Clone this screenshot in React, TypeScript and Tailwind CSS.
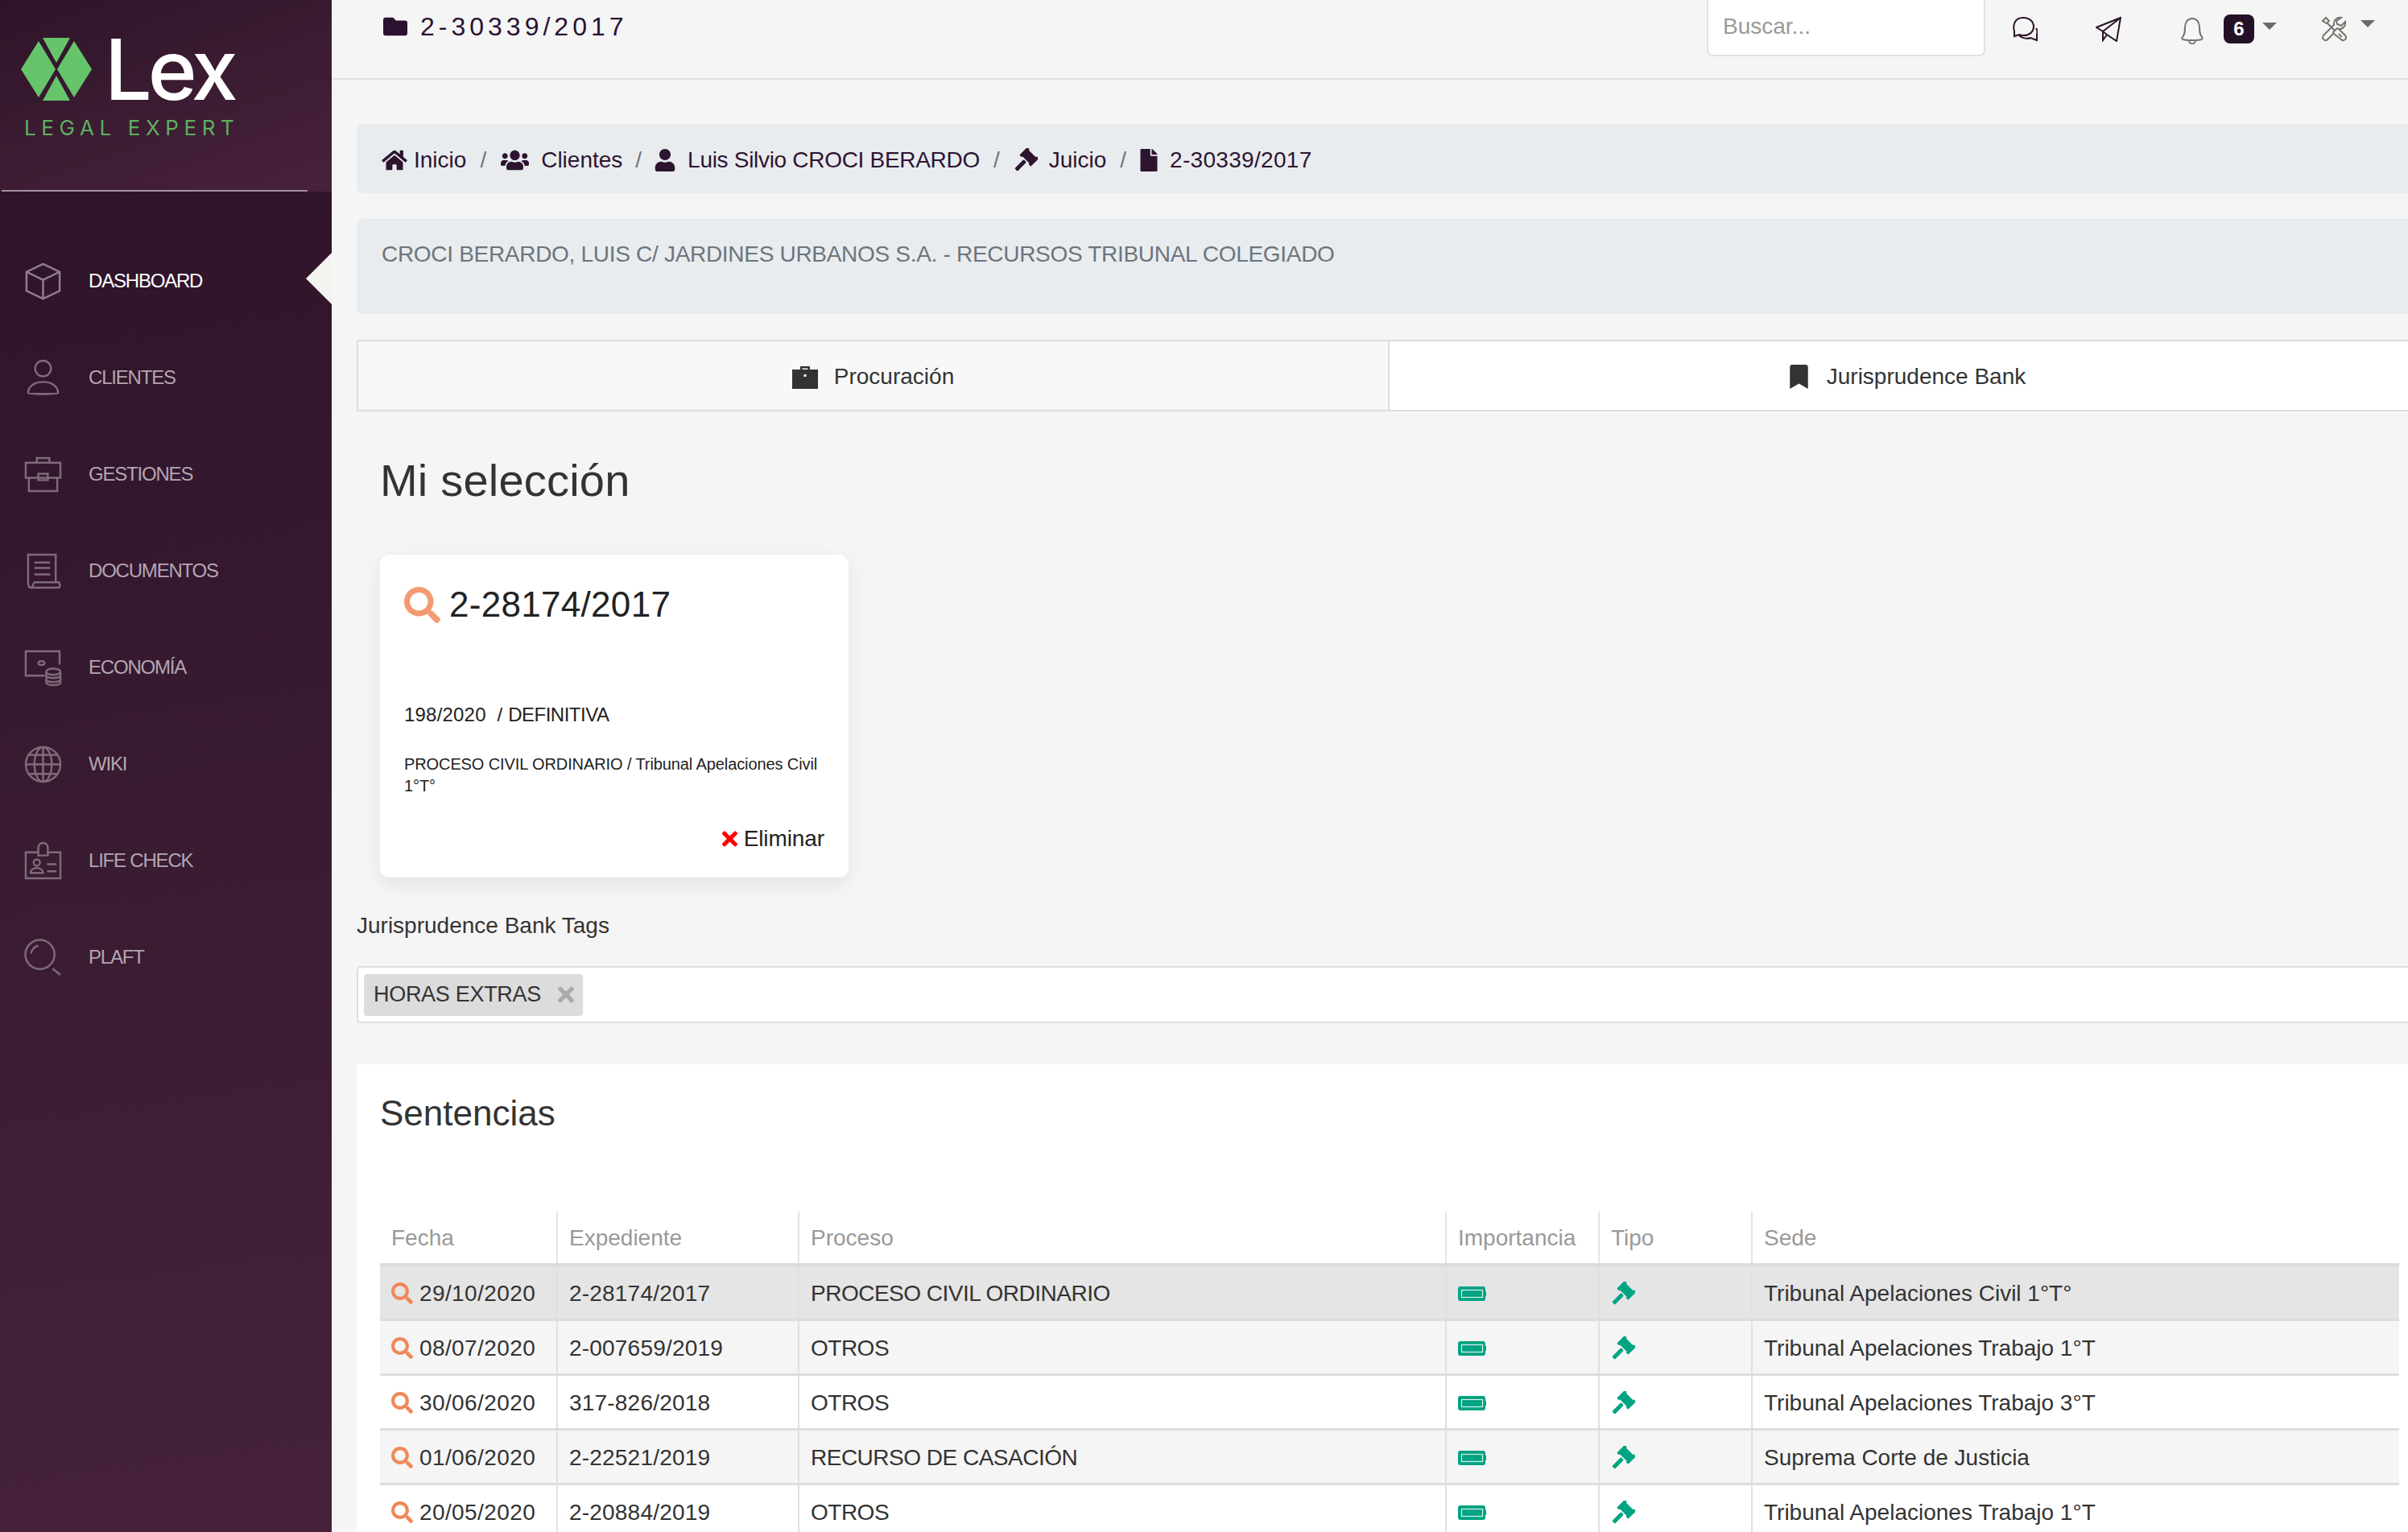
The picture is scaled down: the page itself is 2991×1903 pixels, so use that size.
import { FaBookmark, FaFile, FaFolder, FaHome, FaSearch, FaTimes, FaUser, FaUsers } from 'react-icons/fa'
import type { ReactNode } from 'react'

function NavIcon({ children }: { children: ReactNode }) {
  return (
    <svg viewBox="0 0 48 48" className="h-[47px] w-[47px] shrink-0" fill="none" stroke="currentColor" strokeWidth="2.5">
      {children}
    </svg>
  )
}

const navItems = [
  {
    label: 'DASHBOARD',
    icon: (
      <>
        <path d="M24 2 45 12v24L24 46 3 36V12Z" />
        <path d="M3 12l21 10 21-10M24 22v24" />
      </>
    ),
  },
  {
    label: 'CLIENTES',
    icon: (
      <>
        <ellipse cx="24" cy="12" rx="10" ry="10" />
        <path d="M5 43c0-9 9-14 19-14s19 5 19 14c0 2-38 2-38 0Z" />
      </>
    ),
  },
  {
    label: 'GESTIONES',
    icon: (
      <>
        <path d="M16 9V3h16v6M2 9h44v19H2ZM6 28v17h36V28" />
        <path d="M18 23h12v8H18Z" />
      </>
    ),
  },
  {
    label: 'DOCUMENTOS',
    icon: (
      <>
        <path d="M40 38V3H5v36c0 4 2 6 5 6h33c3 0 3-7 0-7H14c-3 0-3 7-4 7" />
        <path d="M13 13h20M13 20h20M13 28h20" />
      </>
    ),
  },
  {
    label: 'ECONOMÍA',
    icon: (
      <>
        <path d="M45 20V3H2v31h24" />
        <ellipse cx="22" cy="18" rx="4" ry="2.5" />
        <ellipse cx="37" cy="29" rx="9" ry="4" />
        <path d="M28 29v14c0 4 18 4 18 0V29M28 34c0 4 18 4 18 0M28 39c0 4 18 4 18 0" />
      </>
    ),
  },
  {
    label: 'WIKI',
    icon: (
      <>
        <circle cx="24" cy="24" r="22" />
        <ellipse cx="24" cy="24" rx="11" ry="22" />
        <path d="M24 2v44M2 24h44M6 12h36M6 36h36" />
      </>
    ),
  },
  {
    label: 'LIFE CHECK',
    icon: (
      <>
        <path d="M18 13H2v33h44V13H30" />
        <path d="M18 17V7a6 6 0 0 1 12 0v10Z" />
        <circle cx="16" cy="26" r="4" />
        <path d="M8 39c0-8 16-8 16 0ZM29 28h12M29 37h12" />
      </>
    ),
  },
  {
    label: 'PLAFT',
    icon: (
      <>
        <circle cx="20" cy="20" r="18.5" />
        <path d="M9 19c0-5 4-9 9-10M36 38l10 8" />
      </>
    ),
  },
]

function Gavel({ className }: { className: string }) {
  return (
    <svg viewBox="0 0 30 30" className={className} fill="currentColor">
      <g transform="rotate(45 15 15)">
        <rect x="7" y="3.5" width="16" height="11" />
        <rect x="5" y="2" width="4" height="14" rx="1" />
        <rect x="21" y="2" width="4" height="14" rx="1" />
        <rect x="12.5" y="16" width="5" height="16" rx="1.5" />
      </g>
    </svg>
  )
}

function Battery() {
  return (
    <svg viewBox="0 0 35 18" className="h-[18px] w-[35px]">
      <path d="M3 0h28a3 3 0 0 1 3 3v3h1v6h-1v3a3 3 0 0 1-3 3H3a3 3 0 0 1-3-3V3a3 3 0 0 1 3-3Z" fill="#00a383" />
      <rect x="4.5" y="4.5" width="26" height="9" fill="#00a383" stroke="#dff1ec" strokeWidth="1.2" />
    </svg>
  )
}

function Caret({ className }: { className: string }) {
  return <span className={`h-0 w-0 border-x-[9px] border-t-[9px] border-x-transparent border-t-[#6f6a62] ${className}`} />
}

function Sidebar() {
  return (
    <aside className="relative flex h-full w-[412px] shrink-0 flex-col bg-[linear-gradient(172deg,#2b1228_0%,#45223a_100%)]">
      <div className="h-[238px] bg-[linear-gradient(160deg,#2e1429_0%,#3a1b31_45%,#48223b_100%)]">
        <div className="flex items-center pl-[26px] pt-[46px]">
          <svg viewBox="0 0 88 78" className="h-[78px] w-[88px] shrink-0" fill="#66c46a">
            <path d="M22 4 43 39 22 74 0 39ZM66 4 88 39 66 74 45 39ZM27 0H61L44 31ZM27 78H61L44 47Z" />
          </svg>
          <span className="ml-[16px] font-['Inter',sans-serif] text-[104px] leading-[80px] font-medium tracking-[-5px] text-white">Lex</span>
        </div>
        <div className="mt-[18px] pl-[30px] font-['Inter',sans-serif] text-[26px] leading-[30px] tracking-[6.6px] whitespace-nowrap text-[#5cb05f]">LEGAL EXPERT</div>
        <div className="mt-[62px] ml-[2px] h-[2px] w-[380px] bg-[#a48fa2]" />
      </div>
      <nav className="pt-[51px]">
        {navItems.map((item, i) => (
          <div key={item.label} className="relative flex h-[120px] items-center pl-[30px]">
            <span className={i === 0 ? 'text-[#90808f]' : 'text-[#7d6b7b]'}>
              <NavIcon>{item.icon}</NavIcon>
            </span>
            <span className={`ml-[33px] text-[24px] tracking-[-1.2px] ${i === 0 ? 'text-white' : 'text-[#b3a6b1]'}`}>{item.label}</span>
            {i === 0 && <span className="absolute top-[25px] right-0 h-[64px] w-[32px] bg-[#f3f3ef] [clip-path:polygon(100%_0,0_50%,100%_100%)]" />}
          </div>
        ))}
      </nav>
    </aside>
  )
}

function Topbar() {
  return (
    <header className="flex h-[99px] items-start border-b-2 border-[#e0e0e0] pl-[62px]">
      <div className="flex h-[66px] items-center text-[#2a1230]">
        <FaFolder className="h-[30px] w-[34px]" />
        <span className="ml-[14px] text-[32px] tracking-[5px]">2-30339/2017</span>
      </div>
      <div className="ml-auto flex h-[70px] w-[346px] items-center rounded-b-[8px] border-2 border-t-0 border-[#e2e2e2] bg-white pb-[3px] pl-[18px] text-[28px] text-[#9a9a9a]">Buscar...</div>
      <svg viewBox="0 0 32 32" className="mt-[20px] ml-[33px] h-[32px] w-[32px] text-[#2a1228]" fill="none" stroke="currentColor" strokeWidth="2">
        <path d="M3 25v-6C1 12 3 2 14 2c8 0 13 5 13 11 0 7-6 11-12 11-2 0-4 0-6-1Z" />
        <path d="M9 24c3 3 9 5 14 3l8 3v-7c1-3 1-5-1-8" />
      </svg>
      <svg viewBox="0 0 32 32" className="mt-[20px] ml-[72px] h-[32px] w-[32px] text-[#2a1228]" fill="none" stroke="currentColor" strokeWidth="2">
        <path d="M31 2 1 14l8 5 5 4 12 8ZM31 2 9 19v11l5-7" />
      </svg>
      <svg viewBox="0 0 32 34" className="mt-[21px] ml-[72px] h-[34px] w-[32px] text-[#77736c]" fill="none" stroke="currentColor" strokeWidth="2">
        <path d="M16 2c-6 0-9 5-9 11 0 5 0 8-3 12-2 3 0 4 12 4s14-1 12-4c-3-4-3-7-3-12 0-6-3-11-9-11ZM12 29c0 6 8 6 8 0" />
      </svg>
      <span className="mt-[18px] ml-[23px] flex h-[36px] w-[38px] items-center justify-center rounded-[8px] bg-[#251127] text-[24px] font-bold text-white">6</span>
      <Caret className="mt-[28px] ml-[10px]" />
      <svg viewBox="0 0 32 32" className="mt-[20px] ml-[55px] h-[32px] w-[32px] text-[#77736c]" fill="none" stroke="currentColor" strokeWidth="2">
        <path d="M25 2c-5-1-10 3-9 9L3 24c-3 4 2 8 5 5L21 16c6 1 10-4 9-9l-5 5-5-2-1-4Z" />
        <path d="M2 6l4-4 4 4-3 3ZM8 9l9 9" />
        <path d="M16 19l3-3c1-1 2-1 3 0l8 8c3 4-2 8-5 5l-9-7c-1-1-1-2 0-3Z" fill="#f5f5f5" />
        <path d="M22 22l4 4" />
      </svg>
      <Caret className="mt-[25px] ml-[17px] mr-[41px]" />
    </header>
  )
}

const rows = [
  { fecha: '29/10/2020', exp: '2-28174/2017', proceso: 'PROCESO CIVIL ORDINARIO', sede: 'Tribunal Apelaciones Civil 1°T°', bg: 'bg-[#e5e5e5]' },
  { fecha: '08/07/2020', exp: '2-007659/2019', proceso: 'OTROS', sede: 'Tribunal Apelaciones Trabajo 1°T', bg: 'bg-[#f5f5f5]' },
  { fecha: '30/06/2020', exp: '317-826/2018', proceso: 'OTROS', sede: 'Tribunal Apelaciones Trabajo 3°T', bg: 'bg-white' },
  { fecha: '01/06/2020', exp: '2-22521/2019', proceso: 'RECURSO DE CASACIÓN', sede: 'Suprema Corte de Justicia', bg: 'bg-[#f5f5f5]' },
  { fecha: '20/05/2020', exp: '2-20884/2019', proceso: 'OTROS', sede: 'Tribunal Apelaciones Trabajo 1°T', bg: 'bg-white' },
]

const thClass = 'h-[66px] border-r-2 border-[#e4e4e4] px-[14px] pt-[2px] text-left align-middle font-normal text-[#999999]'
const tdClass = 'h-[68px] border-r-2 border-b-[3px] border-r-[#e0e0e0] border-b-[#dddddd] px-[14px] pt-[3px] align-middle text-[#333333]'

function SentenciasTable() {
  return (
    <table className="w-[2508px] table-fixed border-collapse text-[28px]">
      <colgroup>
        <col className="w-[220px]" />
        <col className="w-[300px]" />
        <col className="w-[804px]" />
        <col className="w-[190px]" />
        <col className="w-[190px]" />
        <col className="w-[804px]" />
      </colgroup>
      <thead>
        <tr className="border-b-4 border-[#dcdcdc]">
          <th className={thClass}>Fecha</th>
          <th className={thClass}>Expediente</th>
          <th className={thClass}>Proceso</th>
          <th className={thClass}>Importancia</th>
          <th className={thClass}>Tipo</th>
          <th className="h-[66px] px-[14px] pt-[2px] text-left align-middle font-normal text-[#999999]">Sede</th>
        </tr>
      </thead>
      <tbody>
        {rows.map((row) => (
          <tr key={row.fecha} className={row.bg}>
            <td className={tdClass}>
              <span className="flex items-center tracking-[0.4px] whitespace-nowrap">
                <FaSearch className="mr-[8px] h-[27px] w-[27px] text-[#f0885a]" />
                {row.fecha}
              </span>
            </td>
            <td className={`${tdClass} tracking-[0.2px]`}>{row.exp}</td>
            <td className={`${tdClass} tracking-[-0.5px]`}>{row.proceso}</td>
            <td className={tdClass}>
              <Battery />
            </td>
            <td className={tdClass}>
              <Gavel className="h-[30px] w-[30px] text-[#00a383]" />
            </td>
            <td className="h-[68px] border-b-[3px] border-[#dddddd] px-[14px] pt-[3px] align-middle text-[#333333]">{row.sede}</td>
          </tr>
        ))}
      </tbody>
    </table>
  )
}

export default function App() {
  return (
    <div className="flex h-[1903px] overflow-hidden bg-[#f5f5f5] font-['Liberation_Sans',Arial,sans-serif]">
      <Sidebar />
      <main className="min-w-0 flex-1 overflow-hidden">
        <Topbar />
        <div className="pl-[31px]">
          <div className="mt-[55px] flex h-[86px] items-center whitespace-nowrap rounded-l-[8px] bg-[#e9ecef] pt-[3px] pl-[31px] text-[28px] text-[#2d1530]">
            <FaHome className="h-[28px] w-[32px]" />
            <span className="ml-[8px]">Inicio</span>
            <span className="mx-[17px] text-[#6c757d]">/</span>
            <FaUsers className="h-[28px] w-[37px]" />
            <span className="ml-[14px]">Clientes</span>
            <span className="mx-[16px] text-[#6c757d]">/</span>
            <FaUser className="h-[28px] w-[26px]" />
            <span className="ml-[15px] tracking-[-0.3px]">Luis Silvio CROCI BERARDO</span>
            <span className="mx-[17px] text-[#6c757d]">/</span>
            <Gavel className="h-[30px] w-[30px]" />
            <span className="ml-[14px]">Juicio</span>
            <span className="mx-[17px] text-[#6c757d]">/</span>
            <FaFile className="h-[28px] w-[22px]" />
            <span className="ml-[15px] tracking-[0.3px]">2-30339/2017</span>
          </div>
          <div className="mt-[32px] h-[118px] whitespace-nowrap rounded-l-[8px] bg-[#e9ecef] pt-[27px] pl-[31px] text-[28px] leading-[34px] tracking-[-0.3px] text-[#6c757d]">
            CROCI BERARDO, LUIS C/ JARDINES URBANOS S.A. - RECURSOS TRIBUNAL COLEGIADO
          </div>
          <div className="mt-[32px] flex h-[89px] w-[2572px] text-[28px] text-[#333333]">
            <div className="flex w-[1281px] shrink-0 items-center justify-center border-2 border-r-0 border-[#dddddd] bg-[#f8f8f8] pt-[2px]">
              <svg viewBox="0 0 32 30" className="mr-[20px] h-[30px] w-[32px]" fill="currentColor">
                <path d="M10 6V2h12v4h-2.5V4.5h-7V6Z" />
                <path d="M0 6h32v24H0Z" />
                <rect x="14.5" y="12" width="3" height="3" fill="#f8f8f8" />
              </svg>
              Procuración
            </div>
            <div className="flex w-[1291px] shrink-0 items-center justify-center border-2 border-[#dddddd] bg-white pt-[2px]">
              <FaBookmark className="mr-[23px] h-[30px] w-[23px]" />
              Jurisprudence Bank
            </div>
          </div>
          <h1 className="mt-[54px] pl-[29px] text-[56px] leading-[64px] font-normal tracking-[0.2px] text-[#333333]">Mi selección</h1>
          <div className="mt-[60px] ml-[29px] h-[401px] w-[582px] rounded-[12px] bg-white px-[30px] pt-[39px] text-[#222222] shadow-[0_8px_24px_rgba(0,0,0,0.08)]">
            <div className="flex items-center">
              <FaSearch className="h-[45px] w-[45px] text-[#f39a72]" />
              <span className="ml-[11px] text-[44px] leading-[46px] tracking-[0.3px]">2-28174/2017</span>
            </div>
            <div className="mt-[99px] text-[24px] leading-[30px] whitespace-pre">
              <span className="tracking-[0.2px]">198/2020  / </span>
              <span className="tracking-[-0.5px]">DEFINITIVA</span>
            </div>
            <div className="mt-[33px] text-[20px] leading-[27px] tracking-[-0.1px]">PROCESO CIVIL ORDINARIO / Tribunal Apelaciones Civil 1°T°</div>
            <div className="mt-[36px] flex items-center justify-end text-[28px] leading-[32px] tracking-[-0.1px]">
              <FaTimes className="mr-[8px] h-[28px] w-[19px] text-[#ff0000]" />
              Eliminar
            </div>
          </div>
          <div className="mt-[44px] text-[28px] leading-[32px] text-[#333333]">Jurisprudence Bank Tags</div>
          <div className="mt-[34px] flex h-[71px] items-center rounded-l-[6px] border-2 border-r-0 border-[#dddddd] bg-white pl-[7px]">
            <div className="flex h-[52px] w-[272px] items-center rounded-[4px] bg-[#dcdcdc] pl-[12px] text-[27px] tracking-[-0.3px] text-[#333333]">
              HORAS EXTRAS
              <FaTimes className="ml-[21px] h-[29px] w-[20px] text-[#aaaaaa]" />
            </div>
          </div>
          <section className="mt-[51px] bg-white pl-[29px]">
            <h2 className="pt-[38px] text-[44px] leading-[46px] font-normal text-[#333333]">Sentencias</h2>
            <div className="pt-[99px]">
              <SentenciasTable />
            </div>
          </section>
        </div>
      </main>
    </div>
  )
}
